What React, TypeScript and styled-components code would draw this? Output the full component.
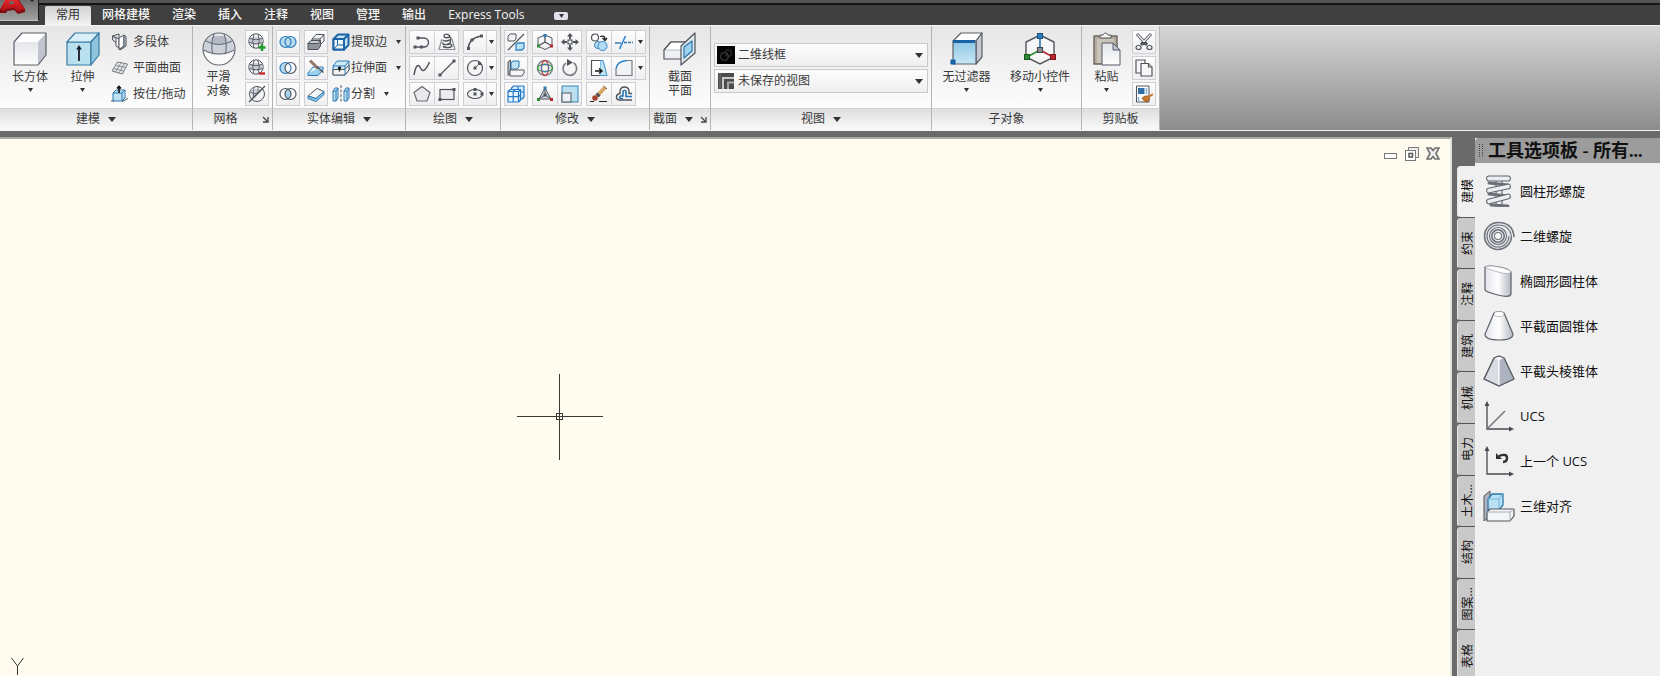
import React from 'react';
import styled, { createGlobalStyle, css } from 'styled-components';

const GlobalStyle = createGlobalStyle`
  *, *::before, *::after { box-sizing: border-box; }
  html, body, #root { height: 100%; margin: 0; }
  body {
    overflow: hidden;
    background: #6a6a6a;
    color: #3a3a3a;
    font: 12px/14px "Open Sans", "Noto Sans CJK SC", sans-serif;
  }
  button, select { font: inherit; color: inherit; margin: 0; padding: 0; border: 0; background: none; }
  svg { display: block; flex: none; }
`;

/* ---------- Drawing palette ---------- */
const INK = '#50555c';
const BLUE = '#2e78b4';
const SKY = '#bfe2f3';
const RED = '#b5272d';
const GREEN = '#2f8a35';

const Node = ({ x, y, c = INK }: { x: number; y: number; c?: string }) => (
  <rect x={x - 1.5} y={y - 1.5} width="3" height="3" fill={c} />
);

const meshBall = (
  <>
    <circle cx="8" cy="8" r="7.2" fill="#f4f5f7" stroke={INK} />
    <path d="M1.500 5.500Q8 2.500 14.500 5.500L14.500 10Q8 13 1.500 10Z" fill="#c7ccd6" />
    <path d="M1.500 5.500Q8 8 14.500 5.500M1 9.500Q8 12.500 15 9.500M6 1Q3.500 8 6 15M10 1Q12.500 8 10 15" fill="none" stroke={INK} strokeWidth=".9" />
  </>
);

const rings = (left: string, right: string, mid: string, ls: string, rs: string) => (
  <>
    <circle cx="6.500" cy="9" r="5.500" fill={left} />
    <circle cx="11.500" cy="9" r="5.500" fill={right} />
    <path d="M9 4.100A5.500 5.500 0 0 1 9 13.900A5.500 5.500 0 0 1 9 4.100Z" fill={mid} />
    <circle cx="6.500" cy="9" r="5.500" fill="none" stroke={ls} strokeWidth="1.200" />
    <circle cx="11.500" cy="9" r="5.500" fill="none" stroke={rs} strokeWidth="1.200" />
  </>
);

const smallIcons: Record<string, React.ReactNode> = {
  polysolid: (
    <g stroke={INK} strokeLinejoin="round">
      <path d="M1.500 3L8 1V8L5 9.500L1.500 7Z" fill="#dfe3e9" />
      <path d="M1.500 3L5 5V13L8 15V6Z" fill="#fff" />
      <path d="M8 5L13 2V13L8 16.500Z" fill="#fff" />
      <path d="M13 2L15 3.500V13L10 16.500H8L13 13Z" fill="#b9cfdd" />
    </g>
  ),
  planar: (
    <g fill="#e3e5e9" stroke="#787d85">
      <path d="M6.500 3L16.500 5L11.500 15L1 12Z" />
      <path d="M10 3.700L4.500 13M13.500 4.400L8 14M4.500 6.500L15 8.500M2.500 9.500L13 12" fill="none" strokeWidth=".8" />
    </g>
  ),
  presspull: (
    <>
      <path d="M2 16V8L5 5H14V13L11 16Z" fill={SKY} stroke={BLUE} />
      <path d="M11 16V8L14 5M2 8H11" stroke={BLUE} fill="none" />
      <path d="M0 16H3M11 16.500L17 13.500" stroke={INK} />
      <path d="M8 8V2M6 3.500L8 1.500L10 3.500" stroke="#111" strokeWidth="1.600" fill="none" />
    </>
  ),
  meshMore: <>{meshBall}<path d="M14 11V18M10.500 14.500H17.500" stroke="#1f9c28" strokeWidth="2.400" /></>,
  meshLess: <>{meshBall}<path d="M11 14.500H17" stroke="#c8262d" strokeWidth="2.400" /></>,
  meshOff: (
    <>
      <circle cx="9" cy="9" r="7.500" fill="#f4f5f7" stroke={INK} />
      <path d="M3 5Q9 3 15 5L6 14Q3 12 3 5Z" fill="#cdd2da" />
      <path d="M2 7Q6 9.500 10 8M6 2.500Q4.500 7 6 13M10 2V8" stroke={INK} strokeWidth=".8" fill="none" />
      <path d="M1 17L17 1" stroke={INK} strokeWidth="1.300" />
    </>
  ),
  union: rings('#b5dcf1', '#b5dcf1', '#b5dcf1', BLUE, BLUE),
  subtract: rings('#b5dcf1', '#fafafa', '#fafafa', BLUE, INK),
  intersect: rings('#fafafa', '#fafafa', '#a5d5ee', INK, INK),
  interfere: (
    <g stroke={INK} strokeLinejoin="round">
      <path d="M5 6L9 1.500H17V8L13 12H5Z" fill="#f2f3f5" />
      <path d="M5 6H13V12M13 6L17 1.500" fill="none" />
      <path d="M1 10.500L4 7.500H13.500V13L11 16.500H1Z" fill="#8f949c" />
      <path d="M1 10.500L4 7.500H13.500L11 10.500Z" fill="#c9ccd1" />
    </g>
  ),
  slice: (
    <>
      <path d="M1 14L6 8H16L11 14Z" fill="#def1fa" stroke={BLUE} />
      <path d="M1 14V16.500H11L16 11V8" fill="#9bd0ec" stroke={BLUE} />
      <path d="M3 1.500L11 9.500" stroke="#94766b" strokeWidth="3" />
      <path d="M10 8L16.500 13.500" stroke="#555" strokeWidth="1.600" />
    </>
  ),
  thicken: (
    <g strokeLinejoin="round">
      <path d="M1 11L10 3.500L17 6.500L9 13.500Z" fill="#f6f9fb" stroke={INK} />
      <path d="M1 11V13.500L9 16.500L17 9.500V6.500L9 13.500Z" fill="#8cc7e8" stroke={BLUE} />
    </g>
  ),
  extractEdges: (
    <g fill="none" stroke="#1c62a4" strokeWidth="2" strokeLinejoin="round">
      <path d="M1.500 6H12V16.500H1.500Z" fill="#fff" />
      <path d="M1.500 6L6 1.500H16.500V12L12 16.500V6H1.500M12 6L16.500 1.500" fill="#c4e3f3" />
      <path d="M1.500 6H12V16.500H1.500Z" fill="#eef7fc" />
      <path d="M5.500 6V12H12M5.500 12L2 16" strokeWidth="1" />
    </g>
  ),
  extrudeFaces: (
    <g strokeLinejoin="round">
      <path d="M1 7L5 2H17V11L13 16H1Z" fill="#cfeaf7" stroke={BLUE} />
      <path d="M1 10.500H13L17 6V11L13 16H1Z" fill="#f5f5f5" stroke={INK} />
      <path d="M1 7H13V16M13 7L17 2" fill="none" stroke={BLUE} />
      <path d="M7.500 12.500V8M6 9.500L7.500 8L9 9.500" stroke="#111" fill="none" strokeWidth="1.300" />
    </g>
  ),
  separate: (
    <g stroke={BLUE} strokeLinejoin="round">
      <path d="M1 6L3 3H6V13L4 16H1Z" fill={SKY} />
      <path d="M1 6H4V16M4 6L6 3" fill="none" />
      <path d="M9 0V18" stroke={INK} strokeDasharray="3 1.500" />
      <path d="M12 6L14 3H17V13L15 16H12Z" fill={SKY} />
      <path d="M12 6H15V16M15 6L17 3" fill="none" />
    </g>
  ),
  polyline: (
    <>
      <path d="M2 14H8M5 5H11A4.500 4.500 0 0 1 11 14H8" fill="none" stroke={INK} strokeWidth="1.400" />
      <Node x={2} y={14} /><Node x={8.500} y={14} /><Node x={5} y={5} />
    </>
  ),
  helix3d: (
    <>
      <path d="M1 16.500L4 6M17 16.500L14 6M1 16.500H17" fill="none" stroke="#888d95" strokeWidth="1.200" />
      <path d="M12 3Q8 -.5 6 2.500Q5.500 6 12 4Q14 5.500 12 7Q6 9 5 7M12 7Q14 10 9 11.500Q4 12 5 9.500M9 11.500Q14 10 14 13Q11 16 5 13.500" fill="none" stroke={INK} strokeWidth="1.400" />
    </>
  ),
  arc: (
    <>
      <path d="M2 16Q3 5 15 3" fill="none" stroke={INK} strokeWidth="1.400" />
      <Node x={2.500} y={15.500} /><Node x={6} y={7} /><Node x={15.500} y={3} />
    </>
  ),
  spline: <path d="M1 16C3 5 5.500 5 7.500 9S12 13 16.500 3" fill="none" stroke={INK} strokeWidth="1.500" />,
  line: <><path d="M2 16L16 2" stroke={INK} strokeWidth="1.200" /><Node x={2} y={16} /><Node x={16} y={2} /></>,
  circle: (
    <>
      <circle cx="9" cy="9" r="7.500" fill="#f6f6f6" stroke={INK} strokeWidth="1.200" />
      <path d="M9 9L13.500 4.500" stroke={INK} /><Node x={9} y={9} /><Node x={13.500} y={4.500} />
    </>
  ),
  polygon: <path d="M9 1.500L17 7.500L14 16H4L1 7.500Z" fill="#e9e9eb" stroke="#666b72" strokeWidth="1.200" />,
  rectangle: <><rect x="2" y="4.500" width="14" height="10" fill="#ececee" stroke={INK} strokeWidth="1.200" /><Node x={2} y={14.500} /><Node x={16} y={4.500} /></>,
  ellipse: (
    <>
      <ellipse cx="9" cy="9" rx="7.500" ry="4.500" fill="#f2f2f2" stroke={INK} strokeWidth="1.200" />
      <Node x={9} y={4.500} /><Node x={9} y={9} /><Node x={16} y={9} />
    </>
  ),
  mirror3d: (
    <>
      <path d="M1 3L3 1H9V6L7 8H1Z" fill="#f3f4f6" stroke={INK} />
      <path d="M1 17L17 1" stroke={INK} strokeWidth="1.200" />
      <path d="M9 11.500L11 10H17V15L15 17H9Z" fill={SKY} stroke="#2f86d0" strokeWidth="1.300" />
    </>
  ),
  move3d: (
    <>
      <path d="M9 2L16 5V13L9 16.500L2 13V5Z" fill="#f7f7f7" stroke={INK} />
      <path d="M9 2V9L2 13M9 9L16 13" fill="none" stroke={INK} strokeWidth="1.300" />
      <Node x={9} y={2.500} c={BLUE} /><Node x={2.500} y={13} c={GREEN} /><Node x={15.500} y={13} c={RED} />
    </>
  ),
  move: (
    <g fill={INK}>
      <rect x="7" y="7" width="4" height="4" fill="#fff" stroke={INK} strokeWidth="1.200" />
      <path d="M9 0L12 3.500H10V6H8V3.500H6ZM9 18L6 14.500H8V12H10V14.500H12ZM0 9L3.500 6V8H6V10H3.500V12ZM18 9L14.500 12V10H12V8H14.500V6Z" />
    </g>
  ),
  copy: (
    <>
      <circle cx="5" cy="4.500" r="3.500" fill="#fff" stroke={INK} strokeWidth="1.200" />
      <circle cx="8" cy="12" r="3.500" fill={SKY} stroke={BLUE} />
      <circle cx="12.500" cy="13" r="4.500" fill="#b4dcf5" stroke="#2f86d0" />
      <path d="M10 3.500Q15 2 15 6M12.500 5L15 7.500L17 5" fill="none" stroke="#222" strokeWidth="1.300" />
    </>
  ),
  trim: (
    <>
      <path d="M0 10H6" stroke={BLUE} strokeWidth="1.400" />
      <path d="M4.500 16L10.500 3" stroke="#2f86d0" strokeWidth="1.600" />
      <path d="M9 9.500H18" stroke={BLUE} strokeWidth="1.400" strokeDasharray="3 1" />
    </>
  ),
  align3d: (
    <g strokeLinejoin="round">
      <path d="M1 3L3.500 1V14L1 16.500Z" fill="#bcc0c7" stroke={INK} />
      <path d="M4 4L6 2H12V8L10 10H4Z" fill={SKY} stroke={BLUE} />
      <path d="M3 11H17V14L15 17H3Z" fill="#f7f7f7" stroke={INK} />
    </g>
  ),
  rotate3d: (
    <>
      <circle cx="9" cy="9" r="7.500" fill="#f4f4f4" stroke="#7c828a" strokeWidth="1.500" />
      <ellipse cx="9" cy="9" rx="7.500" ry="3.500" fill="none" stroke="#3d9a49" strokeWidth="1.300" />
      <ellipse cx="9" cy="9" rx="3.500" ry="7.500" fill="none" stroke="#c2444a" strokeWidth="1.300" />
      <circle cx="9" cy="9" r="4" fill="none" stroke="#3c7fb5" />
    </>
  ),
  rotate: (
    <>
      <path d="M12.500 3.800A6.800 6.800 0 1 1 5 4" fill="none" stroke="#7b8087" strokeWidth="1.700" />
      <path d="M6 0L12 3.500L6 7Z" fill={INK} />
    </>
  ),
  stretch: (
    <>
      <path d="M10 1.500H13L17 16.500H10Z" fill="#bfe2f3" stroke="#3f93cb" />
      <path d="M10 1.500H1.500V16.500H10" fill="#fff" stroke={INK} strokeWidth="1.200" />
      <path d="M5 12H11M9 9.500L12 12L9 14.500" stroke="#111" strokeWidth="1.400" fill="none" />
    </>
  ),
  fillet: (
    <>
      <path d="M1 10Q2 2 12 1.500L17 1.500V16.500H1Z" fill="#f1f2f4" />
      <path d="M1 10Q2 2 12 1.500" fill="none" stroke="#2f86d0" strokeWidth="1.500" />
      <path d="M12 1.500H17V16.500H1V10" fill="none" stroke="#777c84" strokeWidth="1.200" />
    </>
  ),
  array3d: (
    <g fill="#d4ecfa" stroke="#2478c8" strokeWidth="1.200" strokeLinejoin="round">
      <path d="M4.500 3L6.500 1H17V12L15 14H4.500Z" />
      <path d="M11 1V7M17 7H11" fill="none" />
      <path d="M1 6.500L3 4.500H13.500V15L11.500 17H1Z" fill="#e8f5fc" />
      <path d="M1 6.500H11.500V17M11.500 6.500L13.500 4.500M6.200 6.500V17M1 11.700H11.500L13.500 10M6.200 6.500L8.200 4.500" fill="none" />
    </g>
  ),
  scale3d: (
    <>
      <path d="M9 3L3 14H15Z" fill="#cfd6df" stroke={INK} />
      <path d="M9 3V10L3 14M9 10L15 14" stroke={INK} fill="none" />
      <Node x={9} y={3} c={BLUE} /><Node x={2.500} y={14.500} c={GREEN} /><Node x={15.500} y={14.500} c={RED} /><Node x={9} y={10} />
    </>
  ),
  scale: (
    <>
      <rect x="1" y="1" width="16" height="16" fill="#b9dff1" stroke="#3b84b5" />
      <rect x="1" y="8" width="9" height="9" fill="#eff0f2" stroke={INK} />
    </>
  ),
  erase: (
    <>
      <path d="M8 10L15 2.500" stroke="#d7a765" strokeWidth="4" />
      <path d="M13.500 1L17 4" stroke="#6d5530" />
      <path d="M7 11L9 9" stroke="#4f4f4f" strokeWidth="4.500" />
      <circle cx="5" cy="13" r="2.800" fill="#a2452f" />
      <path d="M0 16.500H4M9 16.500H17" stroke="#222" />
    </>
  ),
  offset: (
    <g fill="none">
      <path d="M17 8.500H14V6Q13.500 2 9.500 2Q5.500 2 5 6V8.500Q1.500 9 1.500 12Q1.500 14.500 4 15H17" stroke={INK} strokeWidth="1.400" />
      <path d="M17 11.500H11V6.500Q9.500 4 8 6.500V11H5.500Q4 12.500 5.500 13.500H8" stroke="#2476b5" strokeWidth="1.600" />
    </g>
  ),
  cut: (
    <g fill="none" stroke={INK}>
      <path d="M2 1L12 12M16 1L6 12" strokeWidth="3" />
      <path d="M2.500 1.500L11.500 11.500M15.500 1.500L6.500 11.500" stroke="#f4f4f4" strokeWidth="1.200" />
      <ellipse cx="3.500" cy="14.500" rx="2.500" ry="2" strokeWidth="1.200" />
      <ellipse cx="14.500" cy="14.500" rx="2.500" ry="2" strokeWidth="1.200" />
      <path d="M6 10.500H12" strokeWidth="3" />
    </g>
  ),
  clone: (
    <g fill="#f7f7f7" stroke={INK} strokeWidth="1.200">
      <path d="M1 1H10V14H1Z" />
      <path d="M6 4.500H13.500L17 8V17H6Z" />
      <path d="M13.500 4.500V8H17" fill="#ccc" />
    </g>
  ),
  match: (
    <>
      <path d="M1.500 1H14V17H1.500Z" fill="#fff" stroke={INK} />
      <rect x="3" y="3" width="6.500" height="6" fill="#2f6ea6" />
      <path d="M11.500 3V9M3.500 12V16" stroke="#8ab4d4" strokeWidth="1.500" />
      <path d="M7 13Q10 10 14 11Q16 15 12 17Q9 17 7 13Z" fill="#c9792b" stroke="#8a4c14" strokeWidth=".7" />
      <path d="M13 12.500L18 9" stroke="#c9792b" strokeWidth="2" />
    </>
  ),
  styleThumb: (
    <>
      <rect width="18" height="18" fill="#050505" />
      <circle cx="7.500" cy="10.500" r="4" fill="none" stroke="#444" /><path d="M9 4H14V10H9Z" fill="none" stroke="#333" />
    </>
  ),
  viewThumb: (
    <>
      <rect x="1" y="1" width="16" height="16" fill="#4c4c4c" />
      <path d="M6 17V6H17" fill="none" stroke="#c8c8c8" strokeWidth="2" />
      <path d="M11 17V10.500H17" fill="none" stroke="#a8a8a8" strokeWidth="2" />
      <path d="M3 1V17" stroke="#777" />
    </>
  ),
};

const largeIcons: Record<string, React.ReactNode> = {
  box: (
    <g strokeLinejoin="round" strokeWidth="1.200">
      <path d="M1 10H25V33H1Z" fill="url(#silver)" />
      <path d="M1 10L9 1H33L25 10Z" fill="#fff" />
      <path d="M25 10L33 1V23L25 33Z" fill="#bfc4ce" />
      <path d="M1 10L9 1H33V23L25 33H1Z" stroke="#5c6068" fill="none" />
    </g>
  ),
  extrude: (
    <g stroke="#3b7ba3" strokeLinejoin="round" strokeWidth="1.200">
      <path d="M1 10H25V33H1Z" fill="#b9e0ef" />
      <path d="M1 10L9 1H33L25 10Z" fill="#d8eff8" />
      <path d="M25 10L33 1V23L25 33Z" fill="#8fc4dd" />
      <path d="M13 29V16" stroke="#151b20" strokeWidth="1.800" />
      <path d="M13 13L15.800 17.500H10.200Z" fill="#151b20" stroke="none" />
    </g>
  ),
  sphere: (
    <>
      <circle cx="17" cy="17" r="16" fill="url(#silver)" />
      <path d="M2 15Q4 8 9 5L25 5Q30 8 32 15V21Q17 27 2 21Z" fill="#ccd0d8" />
      <path d="M11 4H23L24 12Q17 14 10 12Z" fill="#b4bac5" />
      <path d="M4 9Q17 16 30 9M1.500 18Q17 26 32.500 18M12 2Q8 12 11 23M22 2Q26 12 23 23" fill="none" stroke="#6a6f78" strokeWidth="1.100" />
      <path d="M2 19Q17 27 32 19Q30 32 17 33Q4 32 2 19Z" fill="#fafafa" />
      <circle cx="17" cy="17" r="16" fill="none" stroke="#6a6f78" strokeWidth="1.200" />
    </>
  ),
  section: (
    <g strokeLinejoin="round" stroke={INK} strokeWidth="1.200">
      <path d="M1 18L8 10H24V22L18 27H1Z" fill="#eef0f3" />
      <path d="M1 18L8 10H24L18 18Z" fill="#fff" stroke="#a3a8b0" strokeWidth=".8" />
      <path d="M1 18L8 10H24" fill="none" />
      <path d="M18 14L32 1V21L18 33Z" fill="#dfe6ea" />
      <path d="M21 15L29 9V19L21 26Z" fill="#9ed2ee" stroke="#2a78af" />
    </g>
  ),
  filter: (
    <g strokeLinejoin="round" stroke="#5c6068" strokeWidth="1.200">
      <path d="M3 9L11 1H32L26 9Z" fill="#fff" />
      <path d="M26 9L32 1V25L26 32Z" fill="#c4c9d2" />
      <path d="M3 9H26V32H3Z" fill="url(#water)" />
      <path d="M3 9.500H25" stroke="#1a61a6" strokeWidth="3" />
      <rect x="1" y="28" width="4" height="4" fill="#1a61a6" stroke="#1a61a6" />
    </g>
  ),
  gizmo: (
    <>
      <path d="M17 3L31 10V25L17 32L3 25V10Z" fill="#f6f6f6" stroke={INK} strokeWidth="1.400" />
      <path d="M17 3V18" stroke="#2c71b0" strokeWidth="1.600" />
      <path d="M17 18L4 25" stroke={GREEN} strokeWidth="1.600" />
      <path d="M17 18L30 25" stroke={RED} strokeWidth="1.600" />
      <rect x="14.500" y="1.500" width="5" height="5" fill="#2f7cc4" stroke="#1b4f82" />
      <rect x="1.500" y="22.500" width="5" height="5" fill={GREEN} stroke="#175b1d" />
      <rect x="27.500" y="22.500" width="5" height="5" fill={RED} stroke="#7c1419" />
      <rect x="14.500" y="15.500" width="5" height="5" fill="#8a8f96" stroke="#444" />
    </>
  ),
  paste: (
    <g strokeLinejoin="round">
      <path d="M4 4H27V32H4Z" fill="#b3aca1" stroke="#6e675d" strokeWidth="1.400" />
      <path d="M7 7H24V31H7Z" fill="#cbc4ba" />
      <path d="M10 6V3H13Q15.500 -1 18 3H21V6Z" fill="#f3f3f3" stroke="#555" />
      <path d="M12 11H23L30 18V33H12Z" fill="url(#silver)" stroke="#555b66" />
      <path d="M23 11V18H30Z" fill="#c3c8d1" stroke="#555b66" />
    </g>
  ),
};

const paletteIcons: Record<string, React.ReactNode> = {
  helix: (
    <g strokeLinecap="round" fill="none">
      <path d="M13 3V31M19 3V31" stroke="#7d828b" strokeWidth="1.500" />
      <path d="M6 8L25 10M6 19L25 21M8 30L25 31" stroke="#6a6f78" strokeWidth="3" />
      <path d="M6 3.500H25M6 15.500L25 11.500M6 26.500L25 21.500" stroke="#5e636b" strokeWidth="5.800" />
      <path d="M6 3.500H25M6 15.500L25 11.500M6 26.500L25 21.500" stroke="#eceef1" strokeWidth="3.800" />
    </g>
  ),
  spiral: (
    <g fill="none" stroke="#6c717a" strokeWidth="1.100">
      <circle cx="15" cy="16" r="13.500" fill="#e6e7ea" stroke="none" />
      <path d="M31 17Q30 3 16 2.500A13.500 13.500 0 1 0 28.500 17" strokeWidth="1.600" />
      <path d="M28.500 17Q27 5 15 5A11 11 0 1 0 26 16" />
      <circle cx="15" cy="16" r="8.500" />
      <circle cx="15" cy="16" r="6.200" strokeWidth="1.600" />
      <circle cx="15" cy="16" r="3.500" fill="#fafafa" />
    </g>
  ),
  cylinder: (
    <g stroke="#5c6068" strokeWidth="1.200">
      <path d="M2 2Q6 0 16 2T28 7V29Q27 33 15 30T2 25Z" fill="url(#silverH)" />
      <path d="M2 2Q6 0 16 2T28 7Q26 10 15 7T2 2Z" fill="#fff" stroke="#9a9fa8" strokeWidth=".7" />
    </g>
  ),
  cone: (
    <g stroke="#5c6068" strokeWidth="1.200">
      <path d="M11 3Q16 0 21 3L30 24Q30 30 16 30Q2 30 2 24Z" fill="url(#silverH)" />
      <ellipse cx="16" cy="4" rx="5" ry="2.500" fill="#fff" stroke="#9a9fa8" strokeWidth=".7" />
    </g>
  ),
  pyramid: (
    <g stroke="#5c6068" strokeWidth="1.200" strokeLinejoin="round">
      <path d="M11 3L16 1L21 3L31 24L16 31L1 24Z" fill="#d9dce2" />
      <path d="M16 5L21 3L31 24L16 31Z" fill="#adb3be" stroke="none" />
      <path d="M11 3L16 1L21 3L16 5Z" fill="#fff" stroke="none" />
      <path d="M16 5V30" stroke="#fff" />
      <path d="M11 3L16 1L21 3L31 24L16 31L1 24Z" fill="none" />
    </g>
  ),
  ucs: (
    <>
      <path d="M4 4V29H28" fill="none" stroke="#454950" strokeWidth="1.300" />
      <path d="M4 1L6.500 6H1.500ZM31 29L26 31.500V26.500Z" fill="#454950" />
      <path d="M5 28L22 11" stroke="#777b82" strokeWidth="1.600" />
    </>
  ),
  ucsPrevious: (
    <>
      <path d="M4 4V29H28" fill="none" stroke="#454950" strokeWidth="1.300" />
      <path d="M4 1L6.500 6H1.500ZM31 29L26 31.500V26.500Z" fill="#454950" />
      <path d="M16 11Q24 8 24 13Q24 17 20 17" fill="none" stroke="#2e3034" strokeWidth="2.400" />
      <path d="M13 8V14H19Z" fill="#2e3034" />
    </>
  ),
  align: (
    <g strokeLinejoin="round">
      <path d="M1 6L7 1V26L1 31Z" fill="#aeb4bd" stroke={INK} />
      <path d="M5 9L9 4H20V15L16 20H5Z" fill="#b9e0f3" stroke="#2a78af" strokeWidth="1.300" />
      <path d="M5 9H16V20M16 9L20 4" fill="none" stroke="#6db4dc" />
      <path d="M4 22L7 19H31V26L27 31H4Z" fill="#f4f5f7" stroke={INK} strokeWidth="1.200" />
      <path d="M4 22H27V31M27 22L31 19" fill="none" stroke="#a6abb4" />
    </g>
  ),
};

const SmallIcon = ({ name }: { name: string }) => (
  <svg width="18" height="18" viewBox="0 0 18 18" aria-hidden="true">{smallIcons[name]}</svg>
);
const LargeIcon = ({ name }: { name: string }) => (
  <svg width="34" height="34" viewBox="0 0 34 34" aria-hidden="true">{largeIcons[name]}</svg>
);
const Caret = ({ wide = false }: { wide?: boolean }) => (
  <svg width={wide ? 8 : 5} height={wide ? 5 : 4} viewBox={wide ? '0 0 8 5' : '0 0 5 4'} aria-hidden="true">
    <path d={wide ? 'M0 0H8L4 5Z' : 'M0 0H5L2.500 4Z'} fill="#333" />
  </svg>
);

const HiddenDefs = styled.svg`position: absolute;`;
const Gradients = () => (
  <HiddenDefs width="0" height="0" aria-hidden="true">
    <defs>
      <linearGradient id="silver" x1="0" y1="0" x2="0" y2="1"><stop offset="0" stopColor="#e4e6eb" /><stop offset="1" stopColor="#fdfdfd" /></linearGradient>
      <linearGradient id="silverH"><stop offset="0" stopColor="#e3e5ea" /><stop offset=".5" stopColor="#fff" /><stop offset="1" stopColor="#b3b8c2" /></linearGradient>
      <linearGradient id="water" x1="0" y1="0" x2="0" y2="1"><stop offset="0" stopColor="#8cc6e4" /><stop offset="1" stopColor="#c8e8f5" /></linearGradient>
      <linearGradient id="ruby" x1="0" y1="0" x2="0" y2="1"><stop offset="0" stopColor="#e8262c" /><stop offset="1" stopColor="#a30f14" /></linearGradient>
    </defs>
  </HiddenDefs>
);

/* ---------- Window frame ---------- */
const Window = styled.div`
  display: flex;
  flex-direction: column;
  height: 100%;
  min-width: 0;
`;
const Header = styled.header`
  display: flex;
  background: #404040;
  border-bottom: 1px solid #f4f4f4;
`;
const AppButton = styled.button`
  width: 39px;
  height: 21px;
  overflow: hidden;
  background: linear-gradient(#6e6e6e, #a2a2a2);
  border-right: 1px solid #1c1c1c;
  border-bottom: 1px solid #c4c4c4;
`;
const HeaderMain = styled.div`flex: 1;`;
const TitleStrip = styled.div`
  height: 5px;
  background: #555;
  border-bottom: 2px solid #151515;
`;
const TabBar = styled.nav`
  display: flex;
  height: 20px;
  padding: 1px 6px 0;
  align-items: stretch;
`;
const Tab = styled.button<{ $active?: boolean }>`
  padding: 0 11px 2px;
  color: #f6f6f6;
  font-weight: 500;
  white-space: nowrap;
  ${p => p.$active && css`
    background: linear-gradient(#d2d2d2, #f2f2f2);
    color: #333;
    font-weight: 400;
    border-radius: 2px 2px 0 0;
  `}
`;
const TabToggle = styled.button`
  align-self: center;
  display: grid;
  place-items: center;
  width: 14px;
  height: 8px;
  margin-left: 19px;
  border-radius: 2px;
  background: #dfe2e8;
`;

/* ---------- Ribbon ---------- */
const Ribbon = styled.div`
  display: flex;
  height: 105px;
  background: linear-gradient(#d6d6d6, #8c8c8c);
  border-bottom: 1px solid #f6f6f6;
`;
const PanelBox = styled.section`
  display: flex;
  flex-direction: column;
  border-right: 1px solid #b4b4b4;
  background: #fff;
`;
const PanelBody = styled.div<{ $center?: boolean }>`
  display: flex;
  flex: 1;
  gap: 4px;
  padding: ${p => (p.$center ? 2 : 4)}px 3px 0;
  align-items: ${p => (p.$center ? 'center' : 'flex-start')};
  background: linear-gradient(#e6e6e6, #fdfdfd);
`;
const PanelFooter = styled.div`
  display: flex;
  height: 22px;
  border-top: 1px solid #d2d2d2;
  background: linear-gradient(#dedede, #fafafa);
`;
const PanelTitle = styled.button`
  flex: 1;
  display: flex;
  align-items: center;
  justify-content: center;
  gap: 8px;
  padding-bottom: 1px;
  white-space: nowrap;
`;
const Launcher = styled.button`
  width: 14px;
  display: grid;
  place-items: center;
`;
const Stack = styled.div<{ $width?: number }>`
  display: flex;
  flex-direction: column;
  align-items: flex-start;
  gap: 2px;
  ${p => p.$width && `width: ${p.$width}px;`}
`;
const CellGroup = styled.div`
  display: flex;
  height: 24px;
  border: 1px solid #cfcfd3;
  background: linear-gradient(#fdfdfd, #efeff1);
`;
const cellWidths = { single: 22, joined: 24, drop: 10 };
const Cell = styled.button<{ $kind: keyof typeof cellWidths }>`
  display: grid;
  place-items: center;
  width: ${p => cellWidths[p.$kind]}px;
  &:not(:first-child) { border-left: 1px solid #d4d4d8; }
`;
const BigButton = styled.button<{ $width: number }>`
  display: flex;
  flex-direction: column;
  align-items: center;
  width: ${p => p.$width}px;
  padding-top: 2px;
  white-space: nowrap;
`;
const BigLabel = styled.span`
  padding: 4px 0;
`;
const RowButton = styled.button<{ $indent?: boolean }>`
  display: flex;
  align-items: center;
  height: 24px;
  gap: ${p => (p.$indent ? 4 : 1)}px;
  padding-left: ${p => (p.$indent ? 3 : 0)}px;
  white-space: nowrap;
`;
const RowText = styled.span`padding-right: 8px;`;
const ViewFields = styled.div`
  display: flex;
  flex-direction: column;
  gap: 2px;
`;
const Combo = styled.label`
  display: flex;
  align-items: center;
  gap: 3px;
  width: 214px;
  height: 24px;
  padding: 0 4px 0 2px;
  border: 1px solid #c9c9cd;
  background: linear-gradient(#fdfdfd, #eeeeef);
`;
const ComboSelect = styled.select`
  flex: 1;
  min-width: 0;
  appearance: none;
  outline: 0;
`;

/* ---------- Work area ---------- */
const Workspace = styled.main`
  display: flex;
  flex: 1;
  min-height: 0;
  gap: 5px;
  padding-top: 6px;
  background: #6a6a6a;
`;
const Drawing = styled.section`
  position: relative;
  flex: 1;
  overflow: hidden;
  background: #fffbef;
  border: solid #e2e4dc;
  border-width: 2px 2px 0 0;
  border-top-color: #a9a9a4;
`;
const DocControls = styled.div`
  display: flex;
  justify-content: flex-end;
  gap: 7px;
  padding: 8px 10px;
`;
const DocButton = styled.button`
  display: grid;
  place-items: center;
`;
const Crosshair = styled.svg`
  position: absolute;
  left: 517px;
  top: 235px;
`;
const AxisMark = styled.svg`
  position: absolute;
  left: 11px;
  bottom: 0;
`;
const Palette = styled.aside`
  display: flex;
  width: 203px;
  overflow: hidden;
`;
const PaletteTabs = styled.div`
  display: flex;
  flex-direction: column;
  width: 18px;
  height: 516px;
  margin-top: 29px;
`;
const PaletteTab = styled.button<{ $active?: boolean }>`
  flex: 1 0 0;
  min-height: 0;
  display: grid;
  place-items: center;
  padding-left: 2px;
  border-bottom: 1px solid #555;
  border-left: 1px solid #e8e8e8;
  border-radius: 4px 0 0 4px;
  background: ${p => (p.$active ? '#f0f0f0' : '#c9c9c9')};
  color: #111;
`;
const Sideways = styled.span`
  writing-mode: vertical-rl;
  text-orientation: sideways;
  transform: rotate(180deg);
`;
const PaletteMain = styled.div`
  display: flex;
  flex: 1;
  min-width: 0;
  flex-direction: column;
  margin-top: 1px;
  background: #f0f0f0;
`;
const PaletteHeader = styled.div`
  display: flex;
  align-items: center;
  gap: 5px;
  height: 25px;
  padding-left: 4px;
  background: #9c9c9c;
  border-radius: 4px 0 0 0;
`;
const PaletteTitle = styled.h2`
  margin: 0;
  color: #111;
  font: bold 18px/22px "Liberation Serif", "Noto Sans CJK SC", serif;
  white-space: nowrap;
`;
const ToolList = styled.ul`
  margin: 0;
  padding: 5px 0 0 8px;
  list-style: none;
`;
const Tool = styled.button`
  display: flex;
  align-items: center;
  gap: 5px;
  height: 45px;
  color: #111;
  font-size: 13px;
  white-space: nowrap;
`;

/* ---------- Ribbon pieces ---------- */
type PanelProps = { title: string; menu?: boolean; launcher?: boolean; center?: boolean; children: React.ReactNode };
const Panel = ({ title, menu, launcher, center, children }: PanelProps) => (
  <PanelBox aria-label={title}>
    <PanelBody $center={center}>{children}</PanelBody>
    <PanelFooter>
      <PanelTitle>{title}{menu && <Caret wide />}</PanelTitle>
      {launcher && (
        <Launcher aria-label={`${title}设置`}>
          <svg width="7" height="7" viewBox="0 0 7 7"><path d="M1 1L5 5M6 1V6H1" fill="none" stroke="#444" strokeWidth="1.300" /></svg>
        </Launcher>
      )}
    </PanelFooter>
  </PanelBox>
);

type BigProps = { icon: string; label: string; second?: string; width: number; menu?: boolean };
const Big = ({ icon, label, second, width, menu }: BigProps) => (
  <BigButton $width={width}>
    <LargeIcon name={icon} />
    <BigLabel>{label}{second && <><br />{second}</>}</BigLabel>
    {menu && <Caret />}
  </BigButton>
);

const Group = ({ icons, drop }: { icons: [string, string][]; drop?: boolean }) => (
  <CellGroup>
    {icons.map(([name, label]) => (
      <Cell key={name} $kind={icons.length > 1 ? 'joined' : 'single'} aria-label={label}><SmallIcon name={name} /></Cell>
    ))}
    {drop && <Cell $kind="drop" aria-label="更多"><Caret /></Cell>}
  </CellGroup>
);

type RowProps = { icon: string; label: string; menu?: boolean; indent?: boolean };
const Row = ({ icon, label, menu, indent }: RowProps) => (
  <RowButton $indent={indent}>
    <SmallIcon name={icon} />
    <RowText>{label}</RowText>
    {menu && <Caret />}
  </RowButton>
);

const Field = ({ icon, name, value }: { icon: string; name: string; value: string }) => (
  <Combo>
    <SmallIcon name={icon} />
    <ComboSelect aria-label={name} defaultValue={value}><option>{value}</option></ComboSelect>
    <Caret wide />
  </Combo>
);

const tabs = ['常用', '网格建模', '渲染', '插入', '注释', '视图', '管理', '输出', 'Express Tools'];
const paletteTabs = ['建模', '约束', '注释', '建筑', '机械', '电力', '土木...', '结构', '图案...', '表格'];
const tools: [string, string][] = [
  ['helix', '圆柱形螺旋'], ['spiral', '二维螺旋'], ['cylinder', '椭圆形圆柱体'], ['cone', '平截面圆锥体'],
  ['pyramid', '平截头棱锥体'], ['ucs', 'UCS'], ['ucsPrevious', '上一个 UCS'], ['align', '三维对齐'],
];

export default function App() {
  return (
    <Window>
      <GlobalStyle />
      <Gradients />
      <Header>
        <AppButton aria-label="应用程序菜单">
          <svg width="38" height="20" viewBox="0 0 38 20">
            <path d="M6 0H19L25 9V12L18 14L14 10L7 11L6 13L0 13V9Z" fill="#7c0c10" />
            <path d="M5 0H18L25 9L18 12L14 8L7 9L5 11L0 10Z" fill="url(#ruby)" />
            <path d="M9 4L10 1H13L14 4Z" fill="#6a6a6a" />
            <path d="M30 0H34L32 2Z" fill="#222" />
          </svg>
        </AppButton>
        <HeaderMain>
          <TitleStrip />
          <TabBar>
            {tabs.map((t, i) => <Tab key={t} $active={i === 0}>{t}</Tab>)}
            <TabToggle aria-label="最小化功能区"><Caret /></TabToggle>
          </TabBar>
        </HeaderMain>
      </Header>

      <Ribbon>
        <Panel title="建模" menu>
          <Big icon="box" label="长方体" width={54} menu />
          <Big icon="extrude" label="拉伸" width={43} menu />
          <Stack $width={81}>
            <Row icon="polysolid" label="多段体" indent />
            <Row icon="planar" label="平面曲面" indent />
            <Row icon="presspull" label="按住/拖动" indent />
          </Stack>
        </Panel>
        <Panel title="网格" launcher>
          <Big icon="sphere" label="平滑" second="对象" width={45} />
          <Stack>
            <Group icons={[['meshMore', '提高平滑度']]} />
            <Group icons={[['meshLess', '降低平滑度']]} />
            <Group icons={[['meshOff', '优化网格']]} />
          </Stack>
        </Panel>
        <Panel title="实体编辑" menu>
          <Stack>
            <Group icons={[['union', '并集']]} />
            <Group icons={[['subtract', '差集']]} />
            <Group icons={[['intersect', '交集']]} />
          </Stack>
          <Stack>
            <Group icons={[['interfere', '干涉']]} />
            <Group icons={[['slice', '剖切']]} />
            <Group icons={[['thicken', '加厚']]} />
          </Stack>
          <Stack $width={70}>
            <Row icon="extractEdges" label="提取边" menu />
            <Row icon="extrudeFaces" label="拉伸面" menu />
            <Row icon="separate" label="分割" menu />
          </Stack>
        </Panel>
        <Panel title="绘图" menu>
          <Stack>
            <Group icons={[['polyline', '多段线'], ['helix3d', '螺旋']]} />
            <Group icons={[['spline', '样条曲线'], ['line', '直线']]} />
            <Group icons={[['polygon', '多边形'], ['rectangle', '矩形']]} />
          </Stack>
          <Stack>
            <Group icons={[['arc', '圆弧']]} drop />
            <Group icons={[['circle', '圆']]} drop />
            <Group icons={[['ellipse', '椭圆']]} drop />
          </Stack>
        </Panel>
        <Panel title="修改" menu>
          <Stack>
            <Group icons={[['mirror3d', '三维镜像']]} />
            <Group icons={[['align3d', '三维对齐']]} />
            <Group icons={[['array3d', '三维阵列']]} />
          </Stack>
          <Stack>
            <Group icons={[['move3d', '三维移动'], ['move', '移动']]} />
            <Group icons={[['rotate3d', '三维旋转'], ['rotate', '旋转']]} />
            <Group icons={[['scale3d', '三维缩放'], ['scale', '缩放']]} />
          </Stack>
          <Stack>
            <Group icons={[['copy', '复制'], ['trim', '修剪']]} drop />
            <Group icons={[['stretch', '拉伸'], ['fillet', '圆角']]} drop />
            <Group icons={[['erase', '删除'], ['offset', '偏移']]} />
          </Stack>
        </Panel>
        <Panel title="截面" menu launcher>
          <Big icon="section" label="截面" second="平面" width={54} />
        </Panel>
        <Panel title="视图" menu center>
          <ViewFields>
            <Field icon="styleThumb" name="视觉样式" value="二维线框" />
            <Field icon="viewThumb" name="命名视图" value="未保存的视图" />
          </ViewFields>
        </Panel>
        <Panel title="子对象">
          <Big icon="filter" label="无过滤器" width={63} menu />
          <Big icon="gizmo" label="移动小控件" width={76} menu />
        </Panel>
        <Panel title="剪贴板">
          <Big icon="paste" label="粘贴" width={43} menu />
          <Stack>
            <Group icons={[['cut', '剪切']]} />
            <Group icons={[['clone', '复制']]} />
            <Group icons={[['match', '特性匹配']]} />
          </Stack>
        </Panel>
      </Ribbon>

      <Workspace>
        <Drawing aria-label="绘图区">
          <DocControls>
            <DocButton aria-label="最小化">
              <svg width="14" height="14" viewBox="0 0 14 14"><rect x=".5" y="6.500" width="12" height="5" fill="#fff" stroke="#777" /></svg>
            </DocButton>
            <DocButton aria-label="还原">
              <svg width="14" height="14" viewBox="0 0 14 14"><path d="M3.500 .5H13.500V10.500H3.500Z" fill="#eee" stroke="#777" /><rect x=".5" y="3.500" width="10" height="10" fill="#fff" stroke="#777" /><rect x="4" y="6.500" width="3.500" height="3.500" fill="none" stroke="#555" strokeWidth="1.500" /></svg>
            </DocButton>
            <DocButton aria-label="关闭">
              <svg width="14" height="14" viewBox="0 0 14 14"><path d="M1 1H5L7 3.500L9 1H13L10 6.500L13 12H9L7 9.500L5 12H1L4 6.500Z" fill="#eee" stroke="#707070" strokeWidth="1.600" /></svg>
            </DocButton>
          </DocControls>
          <Crosshair width="86" height="86" viewBox="0 0 86 86">
            <path d="M0 42.500H86M42.500 0V86" stroke="#3a3935" />
            <rect x="39.500" y="39.500" width="6" height="6" fill="none" stroke="#3a3935" />
          </Crosshair>
          <AxisMark width="13" height="18" viewBox="0 0 13 18">
            <path d="M.5 0L6.500 8L12.500 0M6.500 8V17" fill="none" stroke="#33322f" />
          </AxisMark>
        </Drawing>
        <Palette>
          <PaletteTabs>
            {paletteTabs.map((t, i) => <PaletteTab key={t} $active={i === 0}><Sideways>{t}</Sideways></PaletteTab>)}
          </PaletteTabs>
          <PaletteMain>
            <PaletteHeader>
              <svg width="4" height="14" viewBox="0 0 4 14"><path d="M.5 0V14M3.500 0V14" stroke="#444" strokeDasharray="1 1" /></svg>
              <PaletteTitle>工具选项板 - 所有...</PaletteTitle>
            </PaletteHeader>
            <ToolList>
              {tools.map(([icon, label]) => (
                <li key={label}>
                  <Tool>
                    <svg width="32" height="32" viewBox="0 0 32 32" aria-hidden="true">{paletteIcons[icon]}</svg>
                    {label}
                  </Tool>
                </li>
              ))}
            </ToolList>
          </PaletteMain>
        </Palette>
      </Workspace>
    </Window>
  );
}
